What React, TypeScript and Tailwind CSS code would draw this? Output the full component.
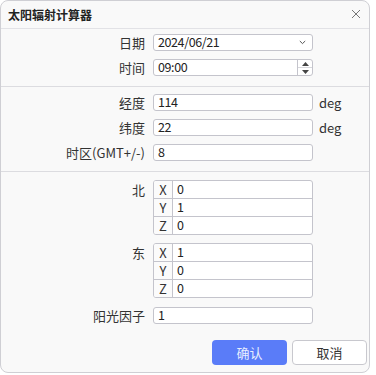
import React from "react";

const font = { fontFamily: '"Noto Sans CJK SC", "Noto Sans", sans-serif' };

function Row({ label, children }: { label: string; children: React.ReactNode }) {
  return (
    <div className="flex items-center h-[17px]">
      <div className="w-[146px] pr-[2px] text-right text-[13px] leading-none text-[#333]">{label}</div>
      <div className="ml-[6px] flex items-center">{children}</div>
    </div>
  );
}

function Input({ value }: { value: string }) {
  return (
    <div className="w-[160px] h-[17px] bg-white border border-[#c4c4cc] rounded-[3px] flex items-center pl-[4px] text-[12.5px] tracking-[-0.4px] leading-none text-[#222]">
      {value}
    </div>
  );
}

function Vec({ label, vals }: { label: string; vals: string[] }) {
  const axes = ["X", "Y", "Z"];
  return (
    <div className="flex items-start">
      <div className="w-[146px] pr-[2px] h-[18px] flex items-center justify-end text-[13px] leading-none text-[#333]">{label}</div>
      <div className="ml-[6px] w-[160px] border border-[#c4c4cc] rounded-[3px] bg-white overflow-hidden">
        {axes.map((a, i) => (
          <div key={a} className={`flex ${i > 0 ? "h-[18px] border-t border-[#c4c4cc]" : "h-[17px]"}`}>
            <div className="w-[19px] border-r border-[#c4c4cc] bg-[#fbfbfb] flex items-center justify-center text-[13px] leading-none text-[#333]">{a}</div>
            <div className="flex-1 flex items-center pl-[4px] text-[12.5px] tracking-[-0.4px] leading-none text-[#222]">{vals[i]}</div>
          </div>
        ))}
      </div>
    </div>
  );
}

export default function App() {
  return (
    <div className="w-[376px] h-[375px] bg-white" style={font}>
      <div className="w-[370px] h-[373px] bg-[#f9f9f9] border border-[#cfcfd4] rounded-[8px] flex flex-col overflow-hidden">
        <div className="h-[28px] flex items-center justify-between pl-[7px] pr-[8px] border-b border-[#e2e2e6] shrink-0">
          <span className="text-[12px] font-bold text-[#222] leading-none">太阳辐射计算器</span>
          <svg width="10" height="10" viewBox="0 0 10 10" className="mt-[-2px]">
            <path d="M1 1L9 9M9 1L1 9" stroke="#777" strokeWidth="1" />
          </svg>
        </div>

        <div className="flex flex-col gap-[8px] pt-[5px] pb-[10px] border-b border-[#dcdce0]">
          <Row label="日期">
            <div className="w-[160px] h-[17px] bg-white border border-[#c4c4cc] rounded-[3px] flex items-center justify-between pl-[4px] pr-[6px] text-[12.5px] tracking-[-0.4px] leading-none text-[#222]">
              <span>2024/06/21</span>
              <svg width="7" height="5" viewBox="0 0 7 5">
                <path d="M0.8 1L3.5 3.6L6.2 1" stroke="#555" strokeWidth="1" fill="none" />
              </svg>
            </div>
          </Row>
          <Row label="时间">
            <div className="w-[160px] h-[17px] bg-white border border-[#c4c4cc] rounded-[3px] flex items-stretch text-[12.5px] tracking-[-0.4px] leading-none text-[#222]">
              <div className="flex-1 flex items-center pl-[4px]">09:00</div>
              <div className="w-[15px] border-l border-[#c4c4cc] flex flex-col">
                <div className="flex-1 flex items-center justify-center border-b border-[#d8d8dc]">
                  <svg width="7" height="4" viewBox="0 0 7 4"><path d="M3.5 0L7 4H0Z" fill="#444" /></svg>
                </div>
                <div className="flex-1 flex items-center justify-center">
                  <svg width="7" height="4" viewBox="0 0 7 4"><path d="M0 0H7L3.5 4Z" fill="#444" /></svg>
                </div>
              </div>
            </div>
          </Row>
        </div>

        <div className="flex flex-col gap-[8px] pt-[7px] pb-[10px] border-b border-[#dcdce0]">
          <Row label="经度">
            <Input value="114" />
            <span className="ml-[6px] text-[13px] leading-none text-[#333]">deg</span>
          </Row>
          <Row label="纬度">
            <Input value="22" />
            <span className="ml-[6px] text-[13px] leading-none text-[#333]">deg</span>
          </Row>
          <Row label="时区(GMT+/-)">
            <Input value="8" />
          </Row>
        </div>

        <div className="flex flex-col pt-[8px]">
          <Vec label="北" vals={["0", "1", "0"]} />
          <div className="h-[8px]" />
          <Vec label="东" vals={["1", "0", "0"]} />
          <div className="h-[9px]" />
          <Row label="阳光因子">
            <Input value="1" />
          </Row>
          <div className="flex justify-end gap-[5px] pr-[2px] mt-[16px]">
            <button className="w-[75px] h-[25px] rounded-[4px] bg-[#5a7cf8] text-[#e8eeff] text-[13px] leading-none">确认</button>
            <button className="w-[75px] h-[25px] rounded-[4px] bg-white border border-[#c8c8ce] text-[#333] text-[13px] leading-none">取消</button>
          </div>
        </div>
      </div>
    </div>
  );
}
